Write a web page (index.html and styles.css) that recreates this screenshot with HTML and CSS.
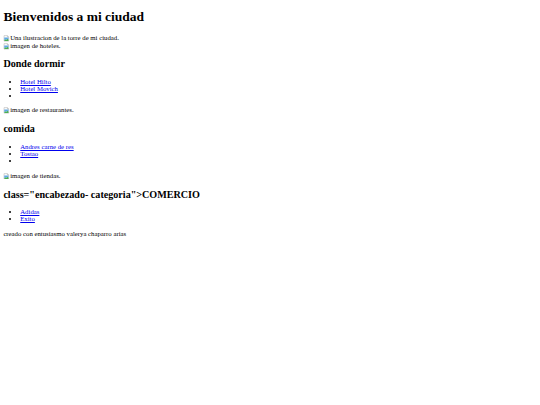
FILE: index.html
```html
<!DOCTYPE html>
<html lang="es">
<head>
<meta charset="utf-8">
<title>Mi ciudad</title>
<link rel="stylesheet" href="styles.css">
</head>
<body>
<h1>Bienvenidos a mi ciudad</h1>
<div class="img-line compact"><span class="broken"><svg class="bi" viewBox="0 0 16 16"><path d="M2.5 1.5h8l3 3v10h-11z" fill="#fff" stroke="#9a9a9a"/><path d="M3 6h10v5l-2-2-3 3-2-2-3 3z" fill="#5fa8e6"/><path d="M3 13l3-3 2 2 3-3 2 2v3.5H3z" fill="#4caf50"/><path d="M10.5 1.5v3h3" fill="#e8e8e8" stroke="#9a9a9a"/></svg>Una ilustracion de la torre de mi ciudad.</span></div>
<div class="img-line compact"><span class="broken"><svg class="bi" viewBox="0 0 16 16"><path d="M2.5 1.5h8l3 3v10h-11z" fill="#fff" stroke="#9a9a9a"/><path d="M3 6h10v5l-2-2-3 3-2-2-3 3z" fill="#5fa8e6"/><path d="M3 13l3-3 2 2 3-3 2 2v3.5H3z" fill="#4caf50"/><path d="M10.5 1.5v3h3" fill="#e8e8e8" stroke="#9a9a9a"/></svg>imagen de hoteles.</span></div>
<h2>Donde dormir</h2>
<ul>
<li><a href="#">Hotel Hilto</a></li>
<li><a href="#">Hotel Movich</a></li>
<li></li>
</ul>
<div class="img-line spaced"><span class="broken"><svg class="bi" viewBox="0 0 16 16"><path d="M2.5 1.5h8l3 3v10h-11z" fill="#fff" stroke="#9a9a9a"/><path d="M3 6h10v5l-2-2-3 3-2-2-3 3z" fill="#5fa8e6"/><path d="M3 13l3-3 2 2 3-3 2 2v3.5H3z" fill="#4caf50"/><path d="M10.5 1.5v3h3" fill="#e8e8e8" stroke="#9a9a9a"/></svg>imagen de restaurantes.</span></div>
<h2>comida</h2>
<ul>
<li><a href="#">Andres carne de res</a></li>
<li><a href="#">Tostao</a></li>
<li></li>
</ul>
<div class="img-line spaced-more"><span class="broken"><svg class="bi" viewBox="0 0 16 16"><path d="M2.5 1.5h8l3 3v10h-11z" fill="#fff" stroke="#9a9a9a"/><path d="M3 6h10v5l-2-2-3 3-2-2-3 3z" fill="#5fa8e6"/><path d="M3 13l3-3 2 2 3-3 2 2v3.5H3z" fill="#4caf50"/><path d="M10.5 1.5v3h3" fill="#e8e8e8" stroke="#9a9a9a"/></svg>imagen de tiendas.</span></div>
<h2>class="encabezado- categoria"&gt;COMERCIO</h2>
<ul>
<li><a href="#">Adidas</a></li>
<li><a href="#">Exito</a></li>
</ul>
<p>creado con entusiasmo valerya chaparro arias</p>
</body>
</html>
```
FILE: styles.css
```css
html {
  background: #fff;
}
body {
  margin: 3.375px;
  font-family: "Liberation Serif", "Times New Roman", serif;
  font-size: 6.75px;
  color: #000;
}
h1 {
  font-size: 13.5px;
  margin: 6px 0 9.045px;
}
h2 {
  font-size: 10.125px;
  margin: 8.4px 0;
}
ul {
  margin: 6.75px 0;
  padding-left: 16.875px;
}
a {
  color: #0000ee;
}
.img-line {
  line-height: 8.6px;
}
.img-line.compact {
  line-height: 7.8px;
}
.img-line.spaced {
  padding-top: 0.8px;
}
.img-line.spaced-more {
  padding-top: 1.6px;
}
.bi {
  width: 6.75px;
  height: 6.75px;
  vertical-align: -1.3px;
}
p {
  margin: 7.5px 0;
}
```
